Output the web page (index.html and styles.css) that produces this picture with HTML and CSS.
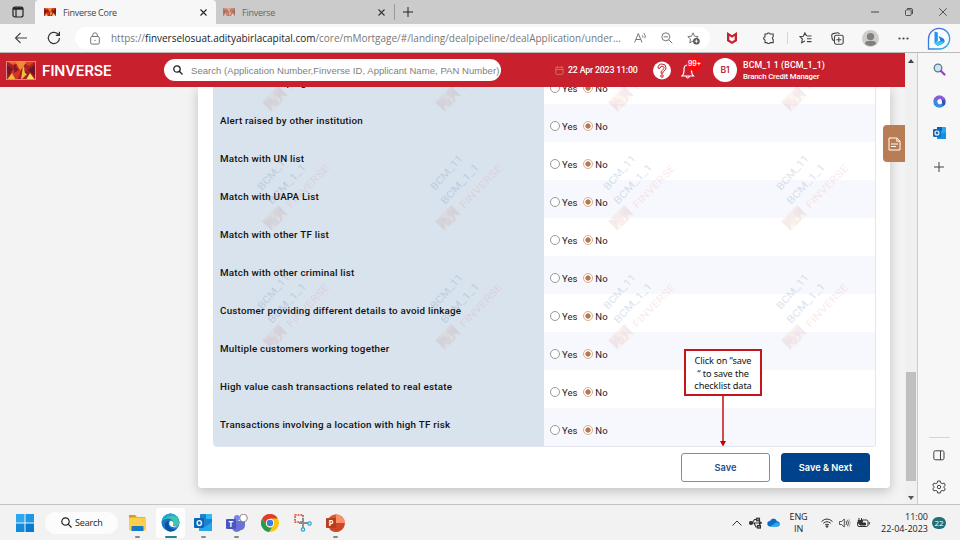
FILE: index.html
```html
<!DOCTYPE html>
<html lang="en">
<head>
<meta charset="utf-8">
<title>Finverse Core</title>
<link rel="stylesheet" href="styles.css">
</head>
<body>
<svg width="0" height="0" class="defs">
  <defs>
    <symbol id="logo" viewBox="0 0 30 19" preserveAspectRatio="none">
      <rect width="30" height="19" fill="#a91f26"/>
      <path d="M0 0H15L7 4Z" fill="#e8642c"/><path d="M15 0H30L23 5Z" fill="#d9411f"/>
      <path d="M9 0H21L17 6L14 10Z" fill="#f08a35"/>
      <path d="M0 3L8 9L2 15Z" fill="#7c1423"/><path d="M30 3L22 9L29 15Z" fill="#701320"/>
      <path d="M11 5L15 10L11 19L5 11Z" fill="#d43626"/><path d="M17 5L22 12L15 19Z" fill="#f5bf3c"/>
      <path d="M18 7L25 15L19 12Z" fill="#8d1822"/><path d="M1 19L6 12L10 19Z" fill="#f5b83d"/>
      <path d="M29 19L24 12L20 19Z" fill="#f9dc62"/><path d="M8 3L13 9L8 12Z" fill="#8d1822"/>
    </symbol>
    <g id="mark">
      <text class="wm-blue" transform="translate(6 39) rotate(-49)" textLength="43" lengthAdjust="spacingAndGlyphs">BCM_11</text>
      <text class="wm-blue" transform="translate(16 53) rotate(-47)" textLength="51" lengthAdjust="spacingAndGlyphs">BCM_1_1</text>
      <text class="wm-red" transform="translate(35 57) rotate(-46)" textLength="56" lengthAdjust="spacingAndGlyphs">FINVERSE</text>
      <use href="#logo" x="-11.5" y="-7" width="23" height="14" transform="translate(19 66) rotate(-45)" opacity=".08"/>
    </g>
  </defs>
</svg>

<div class="tabstrip">
  <div class="workspaces"><svg width="12" height="12" viewBox="0 0 12 12" fill="none" stroke="#222" stroke-width="1.2"><rect x="1" y="1" width="10" height="10" rx="2"/><path d="M1 2.5H11" stroke-width="2.4"/><path d="M4 3V11"/></svg></div>
  <div class="tab active"><svg class="fav" width="12" height="8"><use href="#logo" width="12" height="8"/></svg><span class="t1">Finverse Core</span><svg class="x" width="7" height="7" viewBox="0 0 7 7" stroke="#222" stroke-width="1.1"><path d="M.5 .5L6.5 6.5M6.5 .5L.5 6.5"/></svg></div>
  <div class="tab"><svg class="fav dim" width="12" height="8"><use href="#logo" width="12" height="8"/></svg><span class="t2">Finverse</span><svg class="x" width="7" height="7" viewBox="0 0 7 7" stroke="#333" stroke-width="1.1"><path d="M.5 .5L6.5 6.5M6.5 .5L.5 6.5"/></svg></div>
  <svg class="plus" width="12" height="12" viewBox="0 0 12 12" stroke="#222"><path d="M1 6H11M6 1V11"/></svg>
  <div class="wincontrols">
    <svg width="8" height="8" viewBox="0 0 8 8" stroke="#444"><path d="M0 4H8"/></svg>
    <svg width="8" height="8" viewBox="0 0 8 8" fill="none" stroke="#444" stroke-width=".9"><rect x=".5" y="1.8" width="5.7" height="5.7" rx="1"/><path d="M2 .5H6Q7.5 .5 7.5 2V6"/></svg>
    <svg width="8" height="8" viewBox="0 0 8 8" stroke="#444" stroke-width=".9"><path d="M.3 .3L7.7 7.7M7.7 .3L.3 7.7"/></svg>
  </div>
</div>

<div class="toolbar">
  <svg class="back" width="14" height="12" viewBox="0 0 14 12" fill="none" stroke="#444" stroke-width="1.1"><path d="M13 6H1.5M6.5 1L1.5 6L6.5 11"/></svg>
  <svg class="reload" width="14" height="14" viewBox="0 0 14 14" fill="none" stroke="#333" stroke-width="1.2"><path d="M12.5 7A5.6 5.6 0 1 1 10.7 2.8L12.2 4.2M12.4 .8V4.4H8.8"/></svg>
  <div class="address">
    <svg width="10" height="13" viewBox="0 0 10 13" fill="none" stroke="#777"><rect x=".7" y="4.5" width="8.6" height="7.6" rx="1.2"/><path d="M2.7 4.5V3Q2.7 .8 5 .8T7.3 3V4.5"/><circle cx="5" cy="8.3" r=".6" fill="#555" stroke="none"/></svg>
    <span class="url">https://<b>finverselosuat.adityabirlacapital.com</b>/core/mMortgage/#/landing/dealpipeline/dealApplication/under...</span>
    <div class="addr-icons">
      <svg width="13" height="12" viewBox="0 0 13 12" fill="none" stroke="#777"><path d="M.6 10.500L4.300 1.500L8 10.500M1.900 7.500H6.700M8.200 3.200Q9.300 4.200 8.800 5.600M9.800 1.200Q12 3.200 10.900 6.200"/></svg>
      <svg width="12" height="12" viewBox="0 0 12 12" fill="none" stroke="#777"><circle cx="4.8" cy="4.8" r="4"/><path d="M7.8 7.8L11.3 11.3M2.8 4.8H6.8"/></svg>
      <svg width="13" height="13" viewBox="0 0 13 13"><path d="M6 .8L7.5 4.2L11.2 4.6L8.5 7L9.2 10.8L6 9L2.8 10.8L3.5 7L.8 4.6L4.5 4.2Z" fill="none" stroke="#777"/><circle cx="9.4" cy="9.2" r="3.3" fill="#555"/><path d="M7.6 9.2H11.2M9.4 7.4V11" stroke="#fff" stroke-width=".9"/></svg>
    </div>
  </div>
  <div class="tools">
    <svg width="12" height="12" viewBox="0 0 12 12"><path d="M1 0L6 3.200L11 0V9L6 12L1 9Z" fill="#c8202c"/><path d="M3.300 4L6 5.800L8.700 4V7.800L6 9.400L3.300 7.800Z" fill="#f7f7f7"/></svg>
    <svg width="13" height="12" viewBox="0 0 13 12" fill="none" stroke="#444" stroke-width="1.100"><path d="M3 2H5A1.700 1.500 0 0 1 8.200 2H11.200V4.700A1.300 1.500 0 0 0 11.200 7.500V10.600H8.200A1.700 1.500 0 0 1 5 10.600H3V8A1.800 1.700 0 0 1 3 4.700Z"/></svg>
    <i class="tsep"></i>
    <svg width="13" height="12" viewBox="0 0 13 12" fill="none" stroke="#444" stroke-width="1.1"><path d="M8 4H12.5M8 6.8H12.5M8 9.6H12.5M7.6 4L5.9 .9L4.3 4.2L.8 4.6L3.4 7L2.6 10.7L6 8.9"/></svg>
    <svg width="13" height="13" viewBox="0 0 13 13" fill="none" stroke="#444" stroke-width="1.1"><path d="M3 8.6Q1.6 8.4 1.2 7L.7 3.6Q.6 2 2 1.6L6.6 .7Q8 .6 8.4 2"/><rect x="3.5" y="3.3" width="8.7" height="8.9" rx="1.6"/><path d="M7.8 5.2V10.2M5.3 7.7H10.3"/></svg>
    <svg class="avatar" width="17" height="17" viewBox="0 0 17 17"><circle cx="8.5" cy="8.5" r="8.5" fill="#cfcdca"/><circle cx="8.5" cy="6.6" r="3.7" fill="#7f7f7f"/><path d="M3 14Q3 11 6 11H11Q14 11 14 14Q11.500 16 8.500 16T3 14Z" fill="#7f7f7f"/></svg>
    <svg width="11" height="3" viewBox="0 0 11 3" fill="#444"><circle cx="1.5" cy="1.5" r="1.1"/><circle cx="5.5" cy="1.5" r="1.1"/><circle cx="9.5" cy="1.5" r="1.1"/></svg>
  </div>
</div>

<div class="middle">
  <div class="app">
    <header class="appbar">
      <svg class="brandlogo" width="30" height="19"><use href="#logo" width="30" height="19"/></svg>
      <span class="brand">FINVERSE</span>
      <div class="search">
        <svg width="10" height="10" viewBox="0 0 10 10" fill="none" stroke="#222" stroke-width="1.3"><circle cx="4" cy="4" r="3.2"/><path d="M6.3 6.3L9.5 9.5"/></svg>
        <span>Search (Application Number,Finverse ID, Applicant Name, PAN Number)</span>
      </div>
      <svg class="cal" width="9" height="9" viewBox="0 0 9 9" fill="none" stroke="#c97554"><rect x=".8" y="1.3" width="7.2" height="7" rx=".6"/><path d="M1 3.500H8M2.500 0V2M6.500 0V2"/></svg>
      <span class="date">22 Apr 2023 11:00</span>
      <svg class="help" width="18" height="19" viewBox="0 0 18 19" fill="none"><circle cx="9" cy="9.500" r="9" fill="#fff"/><path d="M5 7.200Q5 3 9 3T13 6.900Q13 8.800 11 9.900Q9.900 10.500 9.900 12.200H8Q7.800 9.700 10 8.500Q11.200 7.800 11.100 6.800Q10.700 5.200 9 5.200T7 7.200Z" stroke="#c8202c" stroke-width="1"/><circle cx="9" cy="15" r="1.300" stroke="#c8202c" stroke-width="1"/></svg>
      <div class="bell">
        <svg width="14" height="17" viewBox="0 0 14 17" fill="none" stroke="#fff" stroke-width="1.200"><path d="M1 14H12.500Q10.500 12 10.500 9V7Q10.500 3 6.800 3T3 7V9Q3 12 1 14ZM5 14.500Q6.800 17.500 8.500 14.500M6.800 3V1"/></svg>
        <span class="badge">99+</span>
      </div>
      <div class="usericon">B1</div>
      <div class="user"><span class="uname">BCM_1 1 (BCM_1_1)</span><span class="urole">Branch Credit Manager</span></div>
    </header>
    <main class="page">
      <section class="card">
        <div class="table">
          <div class="row"><div class="q">Customers helping</div><div class="a"><i class="r"></i>Yes<i class="r on"></i>No</div></div>
          <div class="row alt"><div class="q">Alert raised by other institution</div><div class="a"><i class="r"></i>Yes<i class="r on"></i>No</div></div>
          <div class="row"><div class="q">Match with UN list</div><div class="a"><i class="r"></i>Yes<i class="r on"></i>No</div></div>
          <div class="row alt"><div class="q">Match with UAPA List</div><div class="a"><i class="r"></i>Yes<i class="r on"></i>No</div></div>
          <div class="row"><div class="q">Match with other TF list</div><div class="a"><i class="r"></i>Yes<i class="r on"></i>No</div></div>
          <div class="row alt"><div class="q">Match with other criminal list</div><div class="a"><i class="r"></i>Yes<i class="r on"></i>No</div></div>
          <div class="row"><div class="q">Customer providing different details to avoid linkage</div><div class="a"><i class="r"></i>Yes<i class="r on"></i>No</div></div>
          <div class="row alt"><div class="q">Multiple customers working together</div><div class="a"><i class="r"></i>Yes<i class="r on"></i>No</div></div>
          <div class="row"><div class="q wide">High value cash transactions related to real estate</div><div class="a"><i class="r"></i>Yes<i class="r on"></i>No</div></div>
          <div class="row alt"><div class="q">Transactions involving a location with high TF risk</div><div class="a"><i class="r"></i>Yes<i class="r on"></i>No</div></div>
        </div>
        <div class="actions"><button class="btn">Save</button><button class="btn primary">Save &amp; Next</button></div>
      </section>
      <svg class="watermarks" width="905" height="417" viewBox="0 87 905 417">
        <use href="#mark" x="256" y="33"/><use href="#mark" x="429" y="33"/><use href="#mark" x="602" y="33"/><use href="#mark" x="775" y="33"/>
        <use href="#mark" x="256" y="152"/><use href="#mark" x="429" y="152"/><use href="#mark" x="602" y="152"/><use href="#mark" x="775" y="152"/>
        <use href="#mark" x="256" y="271"/><use href="#mark" x="429" y="271"/><use href="#mark" x="602" y="271"/><use href="#mark" x="775" y="271"/>
      </svg>
      <div class="sidetab"><svg width="13" height="14" viewBox="0 0 13 14" fill="none" stroke="#fff"><path d="M1 1H8.800L12 4.200V13H1ZM8.800 1V4.200H12M3 7H10M3 9.500H8"/></svg></div>
      <div class="callout">Click on “save<br>“ to save the<br>checklist data<svg class="arrow" width="8" height="51" viewBox="0 0 8 51"><path d="M4 0V46" stroke="#c00000" stroke-width="1.400"/><path d="M1 45H7L4 50.500Z" fill="#c00000"/></svg></div>
    </main>
  </div>
  <div class="scroll">
    <svg width="6" height="4" viewBox="0 0 6 4"><path d="M0 4L3 0L6 4Z" fill="#444"/></svg>
    <i class="thumb"></i>
    <svg width="6" height="4" viewBox="0 0 6 4"><path d="M0 0L3 4L6 0Z" fill="#555"/></svg>
  </div>
  <aside class="rail">
    <svg class="mag" width="13" height="13" viewBox="0 0 13 13" fill="none"><circle cx="5" cy="5" r="3.800" fill="#c5e8f7" stroke="#667681" stroke-width="1.300"/><path d="M8 8L11.500 11.500" stroke="#a437d8" stroke-width="2.200" stroke-linecap="round"/></svg>
    <svg width="13" height="13" viewBox="0 0 13 13"><path d="M6.500 .3Q9 .3 12 3.200L12.500 6L8 3.800L4.500 5V9L1 10Q0 6 1 3.200Q3.500 .3 6.500 .3Z" fill="#8b5cd8"/><path d="M.6 5L4.300 5V8L6.500 9.500L9 8.500L12 9.800Q9.500 12.800 6.500 12.800Q3 12.600 1 10Z" fill="#378ddb"/><path d="M8 3.800L12.500 5.500Q12.800 8 12 9.800L9.500 11L8.800 6Z" fill="#3b4db8"/><circle cx="6.600" cy="6.500" r="2.100" fill="#f7f7f7"/></svg>
    <svg width="13" height="12" viewBox="0 0 13 12"><rect x="4" width="9" height="11" rx="1" fill="#28a8ea"/><path d="M4 7L13 5.500V12H4Z" fill="#1490df"/><path d="M4 0H9V4H4Z" fill="#0a64ad"/><rect y="2" width="8" height="8" rx="1" fill="#0f6cbd"/><circle cx="4" cy="6" r="2" fill="none" stroke="#fff" stroke-width="1.100"/></svg>
    <svg width="10" height="10" viewBox="0 0 10 10" stroke="#444"><path d="M0 5H10M5 0V10"/></svg>
    <i class="railline"></i>
    <svg width="12" height="11" viewBox="0 0 12 11" fill="none" stroke="#444"><rect x=".8" y=".8" width="10.200" height="9" rx="1.600"/><path d="M7.500 1V10"/></svg>
    <svg width="14" height="14" viewBox="0 0 14 14" fill="none" stroke="#444"><path d="M5.700 1H8.300L8.700 2.900L10.200 3.700L12 3L13.300 5.300L11.900 6.500V7.600L13.300 8.800L12 11L10.200 10.400L8.700 11.200L8.300 13H5.700L5.300 11.200L3.800 10.400L2 11L.7 8.800L2.100 7.600V6.500L.7 5.300L2 3L3.800 3.700L5.300 2.900Z"/><circle cx="7" cy="7" r="1.700"/></svg>
  </aside>
</div>
<svg class="bing" width="24" height="24" viewBox="0 0 24 24"><defs><linearGradient id="bg" x1="0" y1="0" x2="1" y2="1"><stop stop-color="#5661d5"/><stop offset=".5" stop-color="#2e83df"/><stop offset="1" stop-color="#33bdea"/></linearGradient></defs><path d="M1.500 22V12A10.600 10.300 0 1 1 12 22Z" fill="#f8fbff" stroke="url(#bg)" stroke-width="1.300"/><path d="M7.500 4.500L10.800 5.500V14L7.500 16.500Z" fill="#2196e8"/><path d="M11.500 9L16.500 11.500Q19 14.500 16 16.500L11 18.700L7.500 16.500L13.500 13.500Z" fill="#2678df"/><path d="M7.500 16.500L11 14.500L17.300 14.500Q17 16 11 18.700Z" fill="#35cdea"/></svg>

<footer class="taskbar">
  <svg class="win" width="18" height="18" viewBox="0 0 18 18"><path d="M0 0H8.500V8.500H0Z" fill="#2ba8ee"/><path d="M9.500 0H18V8.500H9.500Z" fill="#1e98e6"/><path d="M0 9.500H8.500V18H0Z" fill="#138bdc"/><path d="M9.500 9.500H18V18H9.500Z" fill="#087bd0"/></svg>
  <div class="tsearch"><svg width="11" height="11" viewBox="0 0 11 11" fill="none" stroke="#222" stroke-width="1.200"><circle cx="4.500" cy="4.500" r="3.700"/><path d="M7.200 7.200L10.500 10.500"/></svg><span>Search</span></div>
  <div class="apps">
    <div class="appicon"><svg width="19" height="18" viewBox="0 0 19 18"><path d="M1 1H7L9 3H17V8H1Z" fill="#d99a14"/><rect x="1" y="3.500" width="17" height="13" rx="1" fill="#fbcf47"/><path d="M3.500 17V13Q3.500 12 4.500 12H14.500Q15.500 12 15.500 13V17Z" fill="#1479c9"/></svg><i></i></div>
    <div class="appicon cur"><svg width="19" height="19" viewBox="0 0 19 19"><circle cx="9.500" cy="9.500" r="9" fill="#1577c5"/><path d="M.6 8.500A9 9 0 0 1 18.400 8.500Q19 13 14.500 13.500Q11.500 13.500 12 11Q12.300 6 7.500 5.600Q3 5.400 .6 8.500Z" fill="#3fc6ad"/><path d="M.6 8A9 9 0 0 1 9 .5Q14 .5 16 4Q11 2 7 4Q3 5 .6 8Z" fill="#25a3d8"/><path d="M8 8Q6 13 11 16Q14 17.500 16.500 15.500Q12 20 7 18Q3 15 4 11Q5 8 8 8Z" fill="#0d519d"/><path d="M10 7.500Q7.500 8.500 8.500 12Q10.500 15.500 17.500 13.700Q12.500 14 11.700 12.300Q13.500 9.500 10 7.500Z" fill="#f7ffff"/></svg><i></i></div>
    <div class="appicon"><svg width="19" height="18" viewBox="0 0 19 18"><rect x="6" y="0" width="12" height="14" rx="1" fill="#1a82d2"/><path d="M12 0H18V5H12Z" fill="#35b8f1"/><path d="M5 9L11 13L18 8V17H5Z" fill="#28a8ea"/><rect y="4" width="10" height="10" rx="1" fill="#0e64b7"/><text x="2" y="12" class="glyph">O</text></svg><i></i></div>
    <div class="appicon"><svg width="22" height="19" viewBox="0 0 22 19"><circle cx="11" cy="4" r="3" fill="#7b83eb"/><path d="M6 7H19V12Q18 16 15 16Q13 18 10 18Q6 17 6 13Z" fill="#6971d2"/><rect y="5" width="10" height="10" rx="1" fill="#4b53bc"/><text x="2.500" y="13" class="glyph">T</text><circle cx="17.500" cy="4" r="3.800" fill="#fff" stroke="#888"/></svg><i></i></div>
    <div class="appicon"><svg width="18" height="18" viewBox="0 0 18 18"><circle cx="9" cy="9" r="9" fill="#fbc514"/><path d="M1.200 4.500A9 9 0 0 1 16.800 4.500H9L5 11Z" fill="#df3c32"/><path d="M1.200 4.500L5.200 11.300Q8 15 11 13.500L8 18A9 9 0 0 1 1.200 4.500Z" fill="#259b4b"/><circle cx="9" cy="9" r="4.100" fill="#fff"/><circle cx="9" cy="9" r="3.200" fill="#377ee5"/></svg></div>
    <div class="appicon"><svg width="18" height="18" viewBox="0 0 18 18" fill="none"><rect x="1" y="1" width="8" height="7" stroke="#d4422b" stroke-width="1.600" stroke-dasharray="1.700 1"/><path d="M9 4V14M5 9H14" stroke="#858d91" stroke-width="1.800"/><circle cx="9" cy="15.500" r="1.700" stroke="#2ba6cf" stroke-width="1.200"/><circle cx="15.500" cy="9.500" r="1.700" stroke="#2ba6cf" stroke-width="1.200"/></svg></div>
    <div class="appicon"><svg width="19" height="18" viewBox="0 0 19 18"><circle cx="10" cy="9" r="8.700" fill="#dc5636"/><path d="M10 .3A8.700 8.700 0 0 1 18.700 9H10Z" fill="#ff8f6b"/><path d="M10 9H18.700A8.700 8.700 0 0 1 4 15.500Z" fill="#cc4628"/><rect y="4" width="10" height="10" rx="1" fill="#b93b20"/><text x="2.500" y="12" class="glyph">P</text></svg><i></i></div>
  </div>
  <div class="tray">
    <svg class="chev" width="10" height="6" viewBox="0 0 10 6" fill="none" stroke="#333"><path d="M.5 5.500L5 1L9.500 5.500"/></svg>
    <svg class="usb" width="13" height="12" viewBox="0 0 13 12" fill="none" stroke="#333" stroke-width="1.100"><path d="M1 6H11M3 6L5.500 2.500H8M5 6L7 10H10"/><circle cx="2" cy="6" r="1.500" fill="#333"/><rect x="7.500" y="1.200" width="3" height="2.600" fill="#888"/><rect x="8.500" y="8.500" width="3" height="2.600" fill="#888"/><path d="M10.500 4.500L12.500 6L10.500 7.500Z" fill="#333"/></svg>
    <svg class="cloud" width="13" height="9" viewBox="0 0 13 9"><path d="M3 8.500Q.3 8.300 .3 5.800T3 3Q4 .5 6.500 .5T10 3.300Q12.700 3.500 12.700 6T10.500 8.500Z" fill="#0a6dcb"/><path d="M3 8.500L9 4.500Q12.700 4 12.700 6.300T10.500 8.500Z" fill="#28a8ea"/></svg>
    <div class="lang">ENG<br>IN</div>
    <svg class="wifi" width="12" height="10" viewBox="0 0 12 10" fill="none" stroke="#333"><path d="M.5 3.500Q6-1.500 11.500 3.500M2.300 5.300Q6 2 9.700 5.300M4 7Q6 5.300 8 7"/><circle cx="6" cy="8.500" r=".8" fill="#333"/></svg>
    <svg class="vol" width="12" height="10" viewBox="0 0 12 10" fill="none" stroke="#444" stroke-width=".9"><path d="M.5 3.500H2.500L5.300 1V9L2.500 6.500H.5ZM7 3Q8.300 5 7 7M8.500 1.800Q10.500 5 8.500 8.200"/><path d="M10 .8Q12.500 5 10 9.200" stroke="#aaa"/></svg>
    <svg class="bat" width="13" height="10" viewBox="0 0 13 10" fill="none" stroke="#333"><path d="M5 2H9.500Q11 2 11 3.500V7Q11 8.500 9.500 8.500H2Q.6 8.500 .6 7V4M12.300 4V6.500"/><path d="M2 0V2M4.500 0V2M1 2.500H5.500V4L3.500 6H2Z" fill="#333"/><path d="M3 5H8.500V7H3Z" fill="#333"/></svg>
    <div class="clock">11:00<br>22-04-2023</div>
    <div class="count">22</div>
  </div>
</footer>
</body>
</html>
```
FILE: styles.css
```css
* { box-sizing: border-box; }
body { margin: 0; width: 960px; height: 540px; overflow: hidden; display: flex; flex-direction: column; background: #f7f7f7; color: #222; font-family: Roboto, "Liberation Sans", sans-serif; white-space: nowrap; }
svg { display: block; flex: none; }
.defs { position: absolute; }

.tabstrip { flex: none; height: 24px; display: flex; align-items: center; background: #cbcbcb; font: 9px "Open Sans", sans-serif; letter-spacing: -.25px; }
.workspaces { width: 35px; padding-left: 12px; }
.tab { width: 179px; height: 24px; display: flex; align-items: center; padding: 0 9px; color: #666; }
.tab.active { width: 181px; background: #f7f7f7; border-radius: 4px 4px 0 0; color: #444; }
.tab .fav { margin-right: 7px; }
.tab:not(.active) { padding-left: 7px; border-right: 1px solid #999; border-image: linear-gradient(transparent 20%, #999 20%, #999 80%, transparent 80%) 1; }
.dim { opacity: .5; }
.tab .x { margin-left: auto; }
.plus { margin-left: 7px; }
.wincontrols { margin-left: auto; display: flex; gap: 26px; padding-right: 13px; }

.toolbar { flex: none; height: 29px; display: flex; align-items: center; background: #f7f7f7; padding: 0 51px 0 14px; border-bottom: 1px solid #bdb9b9; }
.reload { margin-left: 19px; }
.address { margin-left: 14px; width: 635px; height: 22px; background: #fff; border-radius: 11px; display: flex; align-items: center; padding: 0 10px 0 15px; }
.url { margin-left: 11px; font: 10px "Open Sans", sans-serif; color: #777; letter-spacing: -.01px; }
.url b { font-weight: 400; color: #222; }
.addr-icons { margin-left: auto; display: flex; align-items: center; gap: 14px; }
.tools { margin-left: auto; display: flex; align-items: center; width: 183px; justify-content: space-between; }
.tsep { width: 1px; height: 12px; background: #d5d5d5; }
.tools svg:nth-child(2) { margin-left: 5px; }
.tools .tsep { margin-right: -8px; margin-left: -6px; }

.middle { flex: none; height: 451px; display: flex; }
.app { width: 905px; height: 451px; display: flex; flex-direction: column; }
.appbar { flex: none; height: 34px; background: #c8202c; color: #fff; display: flex; align-items: center; padding-left: 6px; }
.brandlogo { outline: 1px solid #d88; outline-offset: -1px; }
.brand { margin-left: 6px; width: 69px; font: 600 14.5px Inter, sans-serif; letter-spacing: -.1px; }
.search { margin-left: 53px; width: 337px; height: 22px; background: #fff; border-radius: 11px; display: flex; align-items: center; padding-left: 9px; color: #808080; font: 9.5px "Liberation Sans", sans-serif; letter-spacing: .05px; overflow: hidden; }
.search span { margin-left: 8px; }
.cal { margin-left: 54px; }
.date { margin-left: 4px; width: 70px; font-size: 8.8px; font-weight: 500; letter-spacing: -.18px; }
.help { margin-left: 15px; }
.bell { margin-left: 10px; position: relative; }
.badge { position: absolute; left: 6px; top: -5px; width: 15px; height: 14px; border-radius: 7px; background: #ff0a0a; font: 600 7px/14px Inter, sans-serif; text-align: center; letter-spacing: -.3px; }
.usericon { margin-left: 18px; width: 24px; height: 24px; border-radius: 50%; background: #fff; color: #b82a3a; font: 600 8.5px/24px Inter, sans-serif; text-align: center; }
.user { margin-left: 6px; display: flex; flex-direction: column; font-weight: 500; }
.uname { font-size: 8.8px; line-height: 12px; letter-spacing: .1px; }
.urole { font-size: 7.8px; line-height: 11px; letter-spacing: -.18px; }

.page { position: relative; flex: 1; background: #f3f3f3; overflow: hidden; padding-left: 198px; }
.card { width: 692px; height: 401px; background: #fff; border-radius: 0 0 4px 4px; padding: 0 14px 0 15px; box-shadow: 0 3px 12px rgba(0,0,0,.22); }
.table { height: 360px; border-right: 1px solid #e3e6ee; border-bottom: 1px solid #e3e6ee; border-radius: 0 0 4px 4px; overflow: hidden; display: flex; flex-direction: column; justify-content: flex-end; }
.row { flex: none; height: 38px; display: grid; grid-template-columns: 331px 1fr; }
.q { background: #d9e3ed; padding: 9px 7px; font: 500 9.8px/16px Roboto, sans-serif; color: #111; letter-spacing: .235px; }
.q.wide { letter-spacing: .26px; }
.a { display: flex; align-items: center; padding: 6px 0 0 6px; font-size: 9.5px; }
.alt .a { background: #f7f8fd; }
.r { width: 10px; height: 10px; margin-right: 2px; border: 1px solid #999; border-radius: 50%; background: #fff; }
.r.on { margin-left: 6px; border-color: #d8ab8a; background: radial-gradient(circle, #b7794f 0 2.300px, #fff 3px); }
.actions { display: flex; justify-content: flex-end; gap: 11px; padding: 6px 6px 0 0; }
.btn { width: 89px; height: 29px; padding: 0; border: 1px solid #6d93bd; border-radius: 3px; background: #fff; color: #1b4d8d; font: 600 9.2px Inter, sans-serif; }
.btn.primary { background: #00438c; border-color: #00438c; color: #fff; }
.watermarks { position: absolute; left: 0; top: 0; pointer-events: none; }
.wm-blue { font: 10px Roboto, sans-serif; fill: #4a78aa; opacity: .2; }
.wm-red { font: 10px Roboto, sans-serif; fill: #d66; opacity: .13; }
.sidetab { position: absolute; right: 0; top: 38px; width: 22px; height: 37px; background: #b97d55; border-radius: 4px 0 0 4px; display: flex; align-items: center; justify-content: center; }
.callout { position: absolute; left: 684px; top: 262px; width: 78px; height: 47px; padding-top: 4px; border: 2px solid #c4141c; background: #fff; color: #111; text-align: center; font: 9.200px/12.500px "Noto Sans", sans-serif; letter-spacing: -.1px; }
.arrow { position: absolute; left: 33px; top: 45px; }

.scroll { width: 13px; background: #f0f0f0; border-right: 1px solid #ccc; display: flex; flex-direction: column; align-items: center; padding: 6px 0 4px; }
.thumb { width: 10px; height: 109px; margin: auto 0 15px; background: #c0c0c0; }
.rail { flex: 1; background: #f7f7f7; display: flex; flex-direction: column; align-items: center; padding-top: 10px; }
.rail svg + svg { margin-top: 19px; }
.rail svg:nth-child(4) { margin-top: 23px; }
.railline { width: 21px; height: 1px; background: #d6d6d6; margin: auto 0 12px; }
.rail .railline ~ svg:last-child { margin: 19px 0 10px; }
.bing { position: absolute; left: 927px; top: 27px; }

.taskbar { flex: none; height: 36px; border-top: 1px solid #c4c4c4; background: #f2f2f2; display: flex; align-items: center; padding-left: 16px; font: 9px "Open Sans", sans-serif; }
.tsearch { margin-left: 11px; width: 73px; height: 22px; border-radius: 11px; background: #fcfcfc; display: flex; align-items: center; padding-left: 16px; gap: 3px; letter-spacing: -.15px; }
.apps { margin-left: 5px; display: flex; }
.appicon { width: 29px; height: 30px; margin-right: 4px; display: flex; flex-direction: column; align-items: center; justify-content: space-between; padding-top: 6px; }
.appicon i { width: 5px; height: 2px; border-radius: 1px; background: #888; }
.appicon.cur { padding-top: 5px; background: #fdfdfd; border-radius: 3px; }
.cur i { width: 12px; background: #28818f; }
.glyph { font: bold 8px "Open Sans", sans-serif; fill: #fff; }
.tray { margin-left: auto; display: flex; align-items: center; padding-right: 14px; }
.usb { margin-left: 7px; }
.cloud { margin-left: 5px; }
.lang { margin-left: 9px; width: 19px; text-align: center; line-height: 11.500px; letter-spacing: -.15px; }
.wifi { margin-left: 13px; }
.vol { margin-left: 6px; }
.bat { margin-left: 6px; }
.clock { margin-left: 11px; text-align: right; line-height: 11.500px; }
.count { margin-left: 4px; width: 14px; height: 12px; border-radius: 6px; background: #236f7c; color: #fff; font-size: 8px; line-height: 12px; text-align: center; }
```
